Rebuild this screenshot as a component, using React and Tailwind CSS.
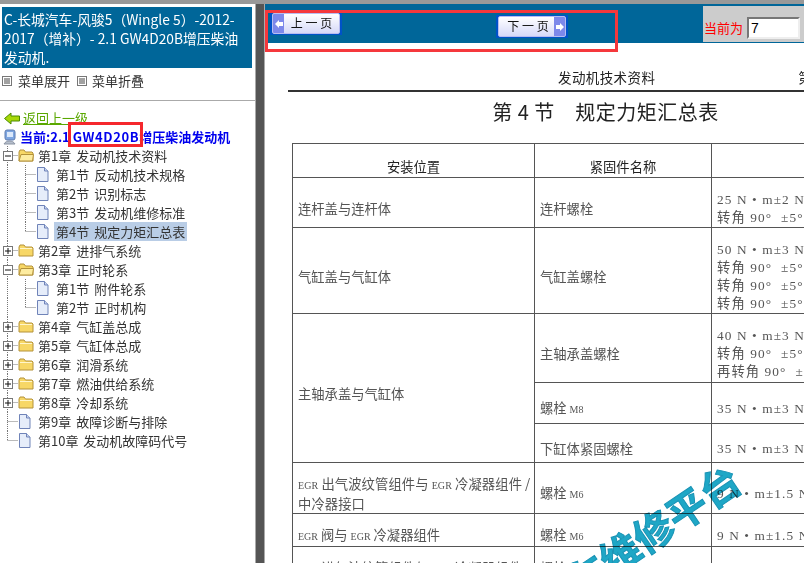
import { useState } from "react";

const cjk = "font-['Noto_Sans_CJK_SC','Liberation_Sans',sans-serif]";

const tree = [
  { type: "open", label: "第1章 发动机技术资料" },
  { type: "leaf", label: "第1节 反动机技术规格" },
  { type: "leaf", label: "第2节 识别标志" },
  { type: "leaf", label: "第3节 发动机维修标准" },
  { type: "leaf", label: "第4节 规定力矩汇总表", active: true, last: true },
  { type: "closed", label: "第2章 进排气系统" },
  { type: "open", label: "第3章 正时轮系" },
  { type: "leaf", label: "第1节 附件轮系" },
  { type: "leaf", label: "第2节 正时机构", last: true },
  { type: "closed", label: "第4章 气缸盖总成" },
  { type: "closed", label: "第5章 气缸体总成" },
  { type: "closed", label: "第6章 润滑系统" },
  { type: "closed", label: "第7章 燃油供给系统" },
  { type: "closed", label: "第8章 冷却系统" },
  { type: "doc", label: "第9章 故障诊断与排除" },
  { type: "doc", label: "第10章 发动机故障码代号", end: true },
];

function Folder({ open }) {
  return (
    <svg width="16" height="13" viewBox="0 0 16 13" className="shrink-0">
      <path d="M1 3 L2 1 H6 L7.5 3 H14 L15 4 V12 H1 Z" fill="#f7d766" stroke="#b4923a" />
      {open ? <path d="M1 12 L3 5.5 H15.5 L14.5 12 Z" fill="#fdeca0" stroke="#b4923a" /> : <path d="M2 4.5 H14" stroke="#fff6cc" />}
    </svg>
  );
}

function Doc() {
  return (
    <svg width="13" height="15" viewBox="0 0 13 15" className="shrink-0">
      <path d="M1.5 .5 H8.5 L12 4 V14.5 H1.5 Z" fill="#e6edfa" stroke="#6f83b8" />
      <path d="M8.5 .5 V4 H12" fill="#c9d6ef" stroke="#6f83b8" />
    </svg>
  );
}

function Expander({ plus }) {
  return (
    <svg width="10" height="10" viewBox="0 0 10 10" className="absolute left-[3px] top-[5px] bg-white">
      <rect x=".5" y=".5" width="9" height="9" fill="#fff" stroke="#777" />
      <path d="M2 5 H8" stroke="#111" />
      {plus && <path d="M5 2 V8" stroke="#111" />}
    </svg>
  );
}

// dotted connector for one tree level, drawn at the row height
function Guide({ through, branch, width }) {
  return (
    <svg width={width} height="19" className="shrink-0">
      <path d={`M7.5 0 V${through ? 19 : 9.5}`} stroke="#777" strokeDasharray="1 1" />
      {branch && <path d={`M7.5 9.5 H${width}`} stroke="#777" strokeDasharray="1 1" />}
    </svg>
  );
}

function TreeRow({ item }) {
  const isLeaf = item.type === "leaf";
  const isFolder = item.type === "open" || item.type === "closed";
  return (
    <div className="flex h-[19px] items-center whitespace-nowrap">
      <div className="relative flex shrink-0">
        <Guide through={!item.end} branch={!isLeaf} width={18} />
        {item.type === "open" && <Expander />}
        {item.type === "closed" && <Expander plus />}
      </div>
      {isLeaf && <Guide through={!item.last} branch width={18} />}
      {isFolder ? <Folder open={item.type === "open"} /> : <Doc />}
      <span
        className={`px-[2px] text-[13px] leading-[19px] text-[#333] [word-spacing:2px] ${isFolder ? "ml-[2px]" : "ml-[5px]"} ${
          item.active ? "bg-[#b9cde6]" : ""
        }`}
      >
        {item.label}
      </span>
    </div>
  );
}

function MenuIcon() {
  return (
    <svg width="10" height="10" viewBox="0 0 10 10" className="shrink-0">
      <rect x=".5" y=".5" width="9" height="9" fill="#fff" stroke="#777" />
      <path d="M2 3 H8 M2 5 H8 M2 7 H8" stroke="#444" />
    </svg>
  );
}

function Sidebar() {
  return (
    <aside className="h-full w-[255px] shrink-0 overflow-hidden bg-white pt-[3px]">
      <div className="ml-[2px] h-[61px] w-[250px] bg-[#006699] px-[2px] pt-[3px] text-[13.8px] leading-[19px] text-white">
        C-长城汽车-风骏5（Wingle 5）-2012-2017（增补）- 2.1 GW4D20B增压柴油发动机.
      </div>
      <div className="flex h-[32px] items-center pb-[6px] pl-[2px] text-[13px] text-[#333]">
        <MenuIcon />
        <span className="ml-[6px]">菜单展开</span>
        <span className="ml-[7px]"><MenuIcon /></span>
        <span className="ml-[5px]">菜单折叠</span>
      </div>
      <div className="h-[1px] bg-[#aaa]" />
      <div className="mt-[8px] flex h-[18px] items-center pl-[4px]">
        <svg width="16" height="13" viewBox="0 0 16 13" className="shrink-0">
          <path d="M0.5 6.5 L7 1 V4 H15.5 V9 H7 V12 Z" fill="#a8d808" stroke="#4a8a00" />
        </svg>
        <span className="ml-[3px] text-[13px] text-[#5aa800] underline">返回上一级</span>
      </div>
      <div className="relative flex h-[20px] items-center whitespace-nowrap pl-[3px]">
        <svg width="13" height="17" viewBox="0 0 13 17" className="shrink-0">
          <rect x="2" y="1" width="10" height="10" rx="2" fill="#7ea6e0" stroke="#5f7db0" />
          <rect x="4" y="3" width="6" height="5" fill="#dce9fb" />
          <path d="M1 15 C3 11 10 11 12 15 Z" fill="#b6bfcc" stroke="#8a93a3" />
        </svg>
        <span className="ml-[4px] text-[13px] font-bold text-[#0000ee]">
          当前:2.1 <span className="tracking-[0.6px]">GW4D20B</span>增压柴油发动机
        </span>
        <div className="absolute left-[68px] top-[-5px] h-[25px] w-[75px] border-[3px] border-[#f5282d]" />
      </div>
      <div className="mt-[-1px]">
        {tree.map((item) => (
          <TreeRow key={item.label} item={item} />
        ))}
      </div>
    </aside>
  );
}

function PageButton({ dir, label }) {
  const arrow = (
    <div className="flex h-full w-[11px] items-center justify-center bg-[#7d88ea]">
      <svg width="8" height="8" viewBox="0 0 8 8">
        <path d={dir === "prev" ? "M0 4 L4 0 V2 H8 V6 H4 V8 Z" : "M8 4 L4 0 V2 H0 V6 H4 V8 Z"} fill="#fff" />
      </svg>
    </div>
  );
  return (
    <button className="h-[23px] w-[72px] bg-[#0052c8] px-[2px] py-[1px]">
      <div className="flex h-full items-stretch overflow-hidden rounded-[2px] border border-[#b8bdf0] bg-gradient-to-b from-white to-[#d6d9f8]">
        {dir === "prev" && arrow}
        <span className={`flex-1 whitespace-pre text-center text-[12px] leading-[17px] text-[#111] ${dir === "next" ? "pl-[3px]" : ""}`}>{label}</span>
        {dir === "next" && arrow}
      </div>
    </button>
  );
}

function Toolbar() {
  const [page, setPage] = useState("7");
  return (
    <div className="relative z-10 flex h-[39px] shrink-0 bg-[#006699]">
      <div className="flex flex-1 items-start pl-[5px] pt-[8px]">
        <PageButton dir="prev" label="上 一 页" />
        <div className="ml-[154px]">
          <PageButton dir="next" label="下 一 页" />
        </div>
      </div>
      <div className="mb-[1px] mt-[2px] flex w-[101px] items-end bg-[#cccccc] pb-[3px] pl-[1px]">
        <span className="mb-[1px] text-[13px] leading-[20px] text-[#ff0000]">当前为</span>
        <input
          value={page}
          onChange={(e) => setPage(e.target.value)}
          className="ml-[4px] h-[22px] w-[53px] border-2 border-t-[#777] border-r-[#eee] border-b-[#eee] border-l-[#777] bg-white pl-[2px] font-['Liberation_Sans',sans-serif] text-[14px] text-black outline-none"
        />
      </div>
      <div className="absolute left-[0px] top-[6px] h-[42px] w-[353px] border-[3px] border-[#f5383c]" />
    </div>
  );
}

const cell = "border border-[#555] px-[5px] pt-[12px] align-middle";
const latin = "font-['Liberation_Serif',serif] text-[10px]";

function Specs({ lines }) {
  return lines.map((l, i) => (
    <div key={i} className="whitespace-pre font-['Liberation_Serif','Noto_Sans_CJK_SC',serif] tracking-[1.1px]">{l}</div>
  ));
}

function DocPage() {
  return (
    <div className={`relative flex-1 overflow-hidden bg-white pl-[23px] text-[#444] ${cjk}`}>
      <div className="flex h-[47px] w-[700px] items-end gap-[143px] pb-[3px] pl-[270px] text-[13.5px] tracking-[0.4px] text-[#222]">
        <span>发动机技术资料</span>
        <span>第</span>
      </div>
      <div className="h-[2px] w-[600px] bg-[#333]" />
      <h1 className="w-[635px] pt-[5px] text-center text-[20px] font-normal leading-[29px] tracking-[0.5px] text-[#222]">第 4 节　规定力矩汇总表</h1>
      <table className="ml-[4px] mt-[17px] w-[719px] table-fixed border-collapse text-[13.3px] leading-[18px] text-[#555]">
        <colgroup>
          <col className="w-[242px]" />
          <col className="w-[177px]" />
          <col className="w-[300px]" />
        </colgroup>
        <tbody>
          <tr className="h-[34px] text-center text-[#222]">
            <td className={cell}>安装位置</td>
            <td className={cell}>紧固件名称</td>
            <td className={cell}>拧紧力矩</td>
          </tr>
          <tr className="h-[50px]">
            <td className={cell}>连杆盖与连杆体</td>
            <td className={cell}>连杆螺栓</td>
            <td className={cell}><Specs lines={["25 N • m±2 N • m", "转角 90°  ±5°"]} /></td>
          </tr>
          <tr className="h-[86px]">
            <td className={cell}>气缸盖与气缸体</td>
            <td className={cell}>气缸盖螺栓</td>
            <td className={cell}><Specs lines={["50 N • m±3 N • m", "转角 90°  ±5°", "转角 90°  ±5°", "转角 90°  ±5°"]} /></td>
          </tr>
          <tr className="h-[69px]">
            <td className={cell} rowSpan={3}>主轴承盖与气缸体</td>
            <td className={cell}>主轴承盖螺栓</td>
            <td className={cell}><Specs lines={["40 N • m±3 N • m", "转角 90°  ±5°", "再转角 90°  ±5°"]} /></td>
          </tr>
          <tr className="h-[41px]">
            <td className={cell}>螺栓 <span className={latin}>M8</span></td>
            <td className={cell}><Specs lines={["35 N • m±3 N • m"]} /></td>
          </tr>
          <tr className="h-[39px]">
            <td className={cell}>下缸体紧固螺栓</td>
            <td className={cell}><Specs lines={["35 N • m±3 N • m"]} /></td>
          </tr>
          <tr className="h-[51px]">
            <td className={`${cell} whitespace-nowrap tracking-[0.1px]`}>
              <span className={latin}>EGR</span> 出气波纹管组件与 <span className={latin}>EGR</span> 冷凝器组件 /<br />中冷器接口
            </td>
            <td className={cell}>螺栓 <span className={latin}>M6</span></td>
            <td className={cell}><Specs lines={["9 N • m±1.5 N • m"]} /></td>
          </tr>
          <tr className="h-[33px]">
            <td className={cell}><span className={latin}>EGR</span> 阀与 <span className={latin}>EGR</span> 冷凝器组件</td>
            <td className={cell}>螺栓 <span className={latin}>M6</span></td>
            <td className={cell}><Specs lines={["9 N • m±1.5 N • m"]} /></td>
          </tr>
          <tr className="h-[30px]">
            <td className={`${cell} whitespace-nowrap tracking-[0.1px]`}><span className={latin}>EGR</span> 进气波纹管组件与 <span className={latin}>EGR</span> 冷凝器组件</td>
            <td className={cell}>螺栓 <span className={latin}>M6</span></td>
            <td className={cell}><Specs lines={["9 N • m±1.5 N • m"]} /></td>
          </tr>
        </tbody>
      </table>
      {/* watermark over the scanned page, the print shows through it */}
      <div className="absolute left-[251px] top-[478px] -rotate-[34deg] whitespace-nowrap text-[40px] font-bold leading-none text-[#1ea7c6] mix-blend-multiply [-webkit-text-stroke:1px_#1a93b5]">
        汽车维修平台
      </div>
    </div>
  );
}

export default function App() {
  return (
    <div className={`flex h-[563px] w-[804px] flex-col overflow-hidden bg-[#999] pt-[4px] ${cjk}`}>
      <div className="flex min-h-0 flex-1">
        <Sidebar />
        <div className="w-[1px] shrink-0 bg-[#aaa]" />
        <div className="w-[8px] shrink-0 bg-[#555]" />
        <div className="w-[1px] shrink-0 bg-[#aaa]" />
        <div className="flex min-w-0 flex-1 flex-col bg-white">
          <Toolbar />
          <DocPage />
        </div>
      </div>
    </div>
  );
}
